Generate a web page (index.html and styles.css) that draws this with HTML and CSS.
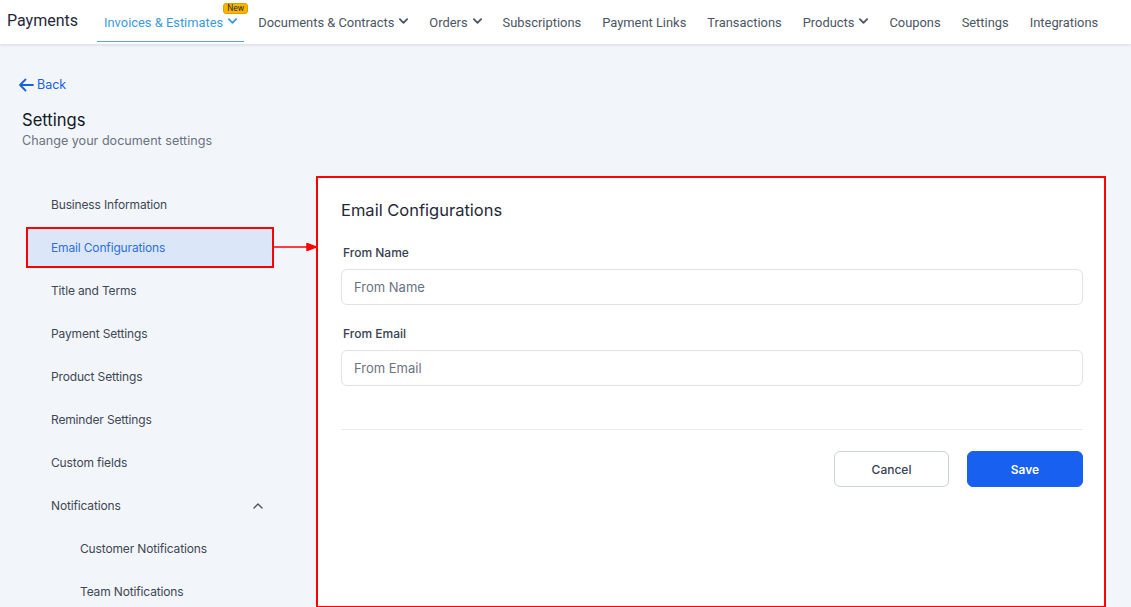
FILE: index.html
```html
<!DOCTYPE html>
<html lang="en">
  <head>
    <meta charset="UTF-8" />
    <title>Payments - Settings</title>
    <link rel="stylesheet" href="styles.css">
  </head>
  <body>
    <header class="topbar">
      <div class="brand">Payments</div>
      <nav class="nav">
        <a class="nav-item active">
          Invoices &amp; Estimates
          <svg class="chev" viewBox="0 0 10 6"><polyline points="1,1 5,5 9,1" /></svg>
          <span class="badge">New</span>
        </a>
        <a class="nav-item">
          Documents &amp; Contracts
          <svg class="chev" viewBox="0 0 10 6"><polyline points="1,1 5,5 9,1" /></svg>
        </a>
        <a class="nav-item">
          Orders
          <svg class="chev" viewBox="0 0 10 6"><polyline points="1,1 5,5 9,1" /></svg>
        </a>
        <a class="nav-item">Subscriptions</a>
        <a class="nav-item">Payment Links</a>
        <a class="nav-item">Transactions</a>
        <a class="nav-item">
          Products
          <svg class="chev" viewBox="0 0 10 6"><polyline points="1,1 5,5 9,1" /></svg>
        </a>
        <a class="nav-item">Coupons</a>
        <a class="nav-item">Settings</a>
        <a class="nav-item">Integrations</a>
      </nav>
    </header>

    <main class="page">
      <a class="back">
        <svg class="back-arrow" viewBox="0 0 16 14"><path d="M15 7H2M7.5 1.5L2 7l5.5 5.5" /></svg>
        Back
      </a>

      <div class="page-head">
        <h1>Settings</h1>
        <p>Change your document settings</p>
      </div>

      <div class="content">
        <aside class="side">
          <div class="side-item">Business Information</div>
          <div class="side-item active">
            Email Configurations
            <svg class="pointer" viewBox="0 0 44 8"><line x1="0" y1="4" x2="36" y2="4" /><polygon points="34,0.5 43,4 34,7.5" /></svg>
          </div>
          <div class="side-item">Title and Terms</div>
          <div class="side-item">Payment Settings</div>
          <div class="side-item">Product Settings</div>
          <div class="side-item">Reminder Settings</div>
          <div class="side-item">Custom fields</div>
          <div class="side-item group">
            Notifications
            <svg class="chev-up" viewBox="0 0 10 6"><polyline points="1,5 5,1 9,5" /></svg>
          </div>
          <div class="side-item sub">Customer Notifications</div>
          <div class="side-item sub">Team Notifications</div>
        </aside>

        <section class="highlight">
          <div class="card">
            <h2>Email Configurations</h2>

            <label class="field-label" for="fromName">From Name</label>
            <input class="field" id="fromName" type="text" placeholder="From Name" />

            <label class="field-label second" for="fromEmail">From Email</label>
            <input class="field" id="fromEmail" type="text" placeholder="From Email" />

            <div class="divider"></div>

            <div class="actions">
              <button class="btn btn-cancel">Cancel</button>
              <button class="btn btn-save">Save</button>
            </div>
          </div>
        </section>
      </div>
    </main>
  </body>
</html>
```

FILE: styles.css
```css
* {
  box-sizing: border-box;
}

body {
  margin: 0;
  background-color: #f2f6fa;
  font-family: "Inter", "Noto Sans", sans-serif;
  color: #374151;
  overflow: hidden;
  height: 607px;
}

/* barra de topo */
.topbar {
  height: 44px;
  background: #ffffff;
  display: flex;
  align-items: stretch;
  box-shadow: 0 1px 3px rgba(0, 0, 0, 0.12);
  font-family: "Roboto", sans-serif;
  position: relative;
  z-index: 1;
}

.brand {
  font-size: 16px;
  color: #1f2937;
  padding-left: 7px;
  width: 97px;
  display: flex;
  align-items: center;
  padding-bottom: 3px;
}

.nav {
  display: flex;
  gap: 7px;
}

.nav-item {
  position: relative;
  display: flex;
  align-items: center;
  gap: 5px;
  padding: 3px 7px 0;
  height: 42px;
  font-size: 12.9px;
  color: #4b5563;
  white-space: nowrap;
  cursor: pointer;
  border-bottom: 1px solid transparent;
}

.nav-item.active {
  color: #3a9ae0;
  border-bottom-color: #5aa6de;
}

.chev {
  width: 9px;
  height: 6px;
  fill: none;
  stroke: currentColor;
  stroke-width: 2;
  stroke-linecap: round;
  stroke-linejoin: round;
  margin-top: -3px;
}

.badge {
  position: absolute;
  top: 3px;
  right: -4px;
  background: #f6b600;
  border: 1px solid #e19c00;
  border-radius: 3px;
  color: #3b2d00;
  font-size: 8.5px;
  line-height: 9px;
  padding: 0 3px;
}

/* pagina */
.page {
  padding-top: 32px;
}

.back {
  display: inline-flex;
  align-items: center;
  gap: 3px;
  margin-left: 18px;
  font-size: 12.5px;
  line-height: 16px;
  color: #1a5fe0;
  cursor: pointer;
}

.back-arrow {
  width: 16px;
  height: 14px;
  fill: none;
  stroke: #1a5fe0;
  stroke-width: 1.8;
  stroke-linecap: round;
  stroke-linejoin: round;
}

.page-head {
  margin: 13px 0 0 22px;
}

.page-head h1 {
  margin: 0;
  font-size: 16.6px;
  line-height: 22px;
  font-weight: 400;
  color: #111827;
}

.page-head p {
  margin: 1px 0 0;
  font-size: 12.6px;
  line-height: 18px;
  color: #6b7280;
}

.content {
  display: flex;
  margin-top: 26px;
  margin-left: 26px;
  gap: 42px;
}

.side {
  width: 248px;
  padding-top: 8px;
  display: flex;
  flex-direction: column;
  gap: 2px;
}

.side-item {
  position: relative;
  height: 41px;
  display: flex;
  align-items: center;
  padding-left: 25px;
  padding-right: 8px;
  font-size: 12px;
  letter-spacing: -0.15px;
  color: #3f4654;
}

.side-item.active {
  background: #dbe7f8;
  color: #2f6ee0;
  outline: 2px solid #f00;
  outline-offset: -2px;
}

.pointer {
  position: absolute;
  right: -43px;
  top: 16px;
  width: 44px;
  height: 8px;
  stroke: #f00;
  stroke-width: 1.5;
  fill: #f00;
}

.side-item.group {
  justify-content: space-between;
}

.chev-up {
  width: 10px;
  height: 6px;
  fill: none;
  stroke: #4b5563;
  stroke-width: 1.4;
  stroke-linecap: round;
  stroke-linejoin: round;
  margin-right: 3px;
}

.side-item.sub {
  padding-left: 54px;
}

/* cartao */
.highlight {
  width: 790px;
  height: 432px;
  border: 2px solid #f00;
}

.card {
  height: 100%;
  background: #ffffff;
  border-radius: 6px;
  padding: 22px 21px 0 23px;
  display: flex;
  flex-direction: column;
}

.card h2 {
  margin: 0;
  font-size: 16.5px;
  line-height: 20px;
  font-weight: 400;
  color: #1f2937;
}

.field-label {
  margin-top: 25px;
  margin-left: 2px;
  font-size: 12px;
  line-height: 16px;
  font-weight: 500;
  color: #374151;
}

.field-label.second {
  margin-top: 21px;
}

.field {
  margin-top: 8px;
  height: 36px;
  border: 1px solid #dfe3e8;
  border-radius: 6px;
  padding: 0 12px;
  font-family: inherit;
  font-size: 13px;
  color: #374151;
  outline: none;
}

.field::placeholder {
  color: #6b7280;
}

.divider {
  margin-top: 43px;
  height: 1px;
  background: #e7eaee;
}

.actions {
  margin-top: 21px;
  display: flex;
  justify-content: flex-end;
  gap: 18px;
}

.btn {
  height: 36px;
  border-radius: 6px;
  font-family: inherit;
  font-size: 12px;
  cursor: pointer;
}

.btn-cancel {
  width: 115px;
  background: #ffffff;
  border: 1px solid #cbd2dc;
  color: #374151;
  font-weight: 500;
}

.btn-save {
  width: 116px;
  background: #1860ef;
  border: 1px solid #1860ef;
  color: #ffffff;
  font-weight: 600;
}
```
